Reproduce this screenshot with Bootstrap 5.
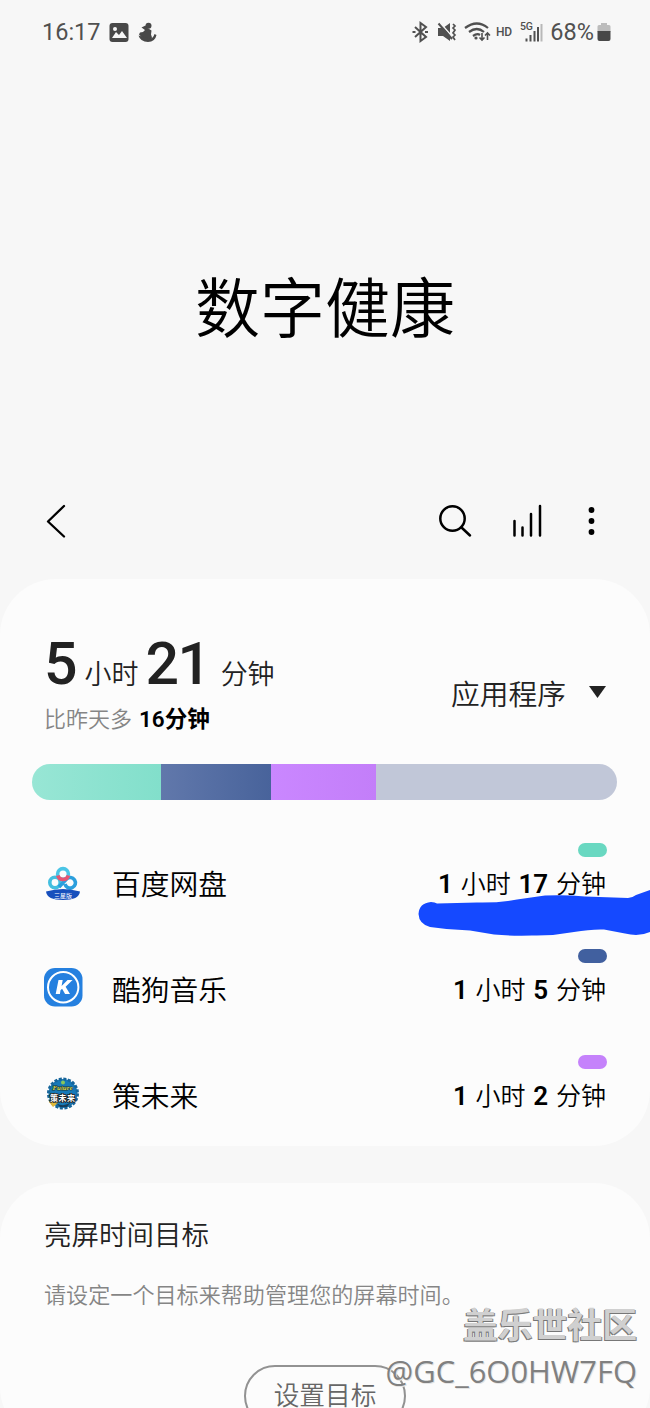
<!DOCTYPE html>
<html lang="zh-CN">
<head>
<meta charset="utf-8">
<meta name="viewport" content="width=device-width, initial-scale=1">
<title>数字健康</title>
<link href="https://cdn.jsdelivr.net/npm/bootstrap@5.3.0/dist/css/bootstrap.min.css" rel="stylesheet">
<style>
body{background:#f7f7f7;color:#000;font-family:Roboto,"Noto Sans CJK SC",sans-serif;height:1408px;overflow:hidden}
svg{display:block;flex:none}
.status{height:64px;padding:0 39px 0 42px;color:#505050;font-size:23.5px;line-height:30px}
.hero{height:421px;padding-top:70px}
.hero h1{font-size:65px;line-height:80px;font-weight:350}
.tools{height:72px;padding:0 48px 0 44px;margin-bottom:22px}
.panel{background:#fcfcfc;border-radius:56px}
.usage{height:567px;padding-top:55px}
.inset{padding:0 44px}
.total{height:60px;line-height:60px;font-size:27px;font-weight:350;color:#222}
.total b{font-size:59px;font-weight:500}
.delta{font-size:22px;line-height:30px;font-weight:350;color:#858585;margin-top:10px}
.delta b{color:#000;font-weight:600;margin-left:7px;font-size:22.5px}
.picker{font-size:28.75px;line-height:36px;font-weight:350;color:#222;margin-top:43px}
.meter{height:36px;margin:29px 32px 32px;border-radius:18px;overflow:hidden;width:585px}
.app{height:106px}
.app-name{font-size:28.75px;line-height:36px;font-weight:350;margin-left:28px}
.app-time{font-size:25px;line-height:35px;font-weight:350;white-space:pre;word-spacing:1.7px}
.app-time b{font-weight:600;font-size:26px}
.pill{width:29px;height:14px;border-radius:7px;margin:11px -1px 10px 0}
.mint{background:#69d8c1}.navy{background:#41609f}.violet{background:#c582fb}
.goal{margin-top:37px;padding-top:33px;height:260px}
.goal h2{font-size:27.5px;line-height:40px;font-weight:350;color:#222;margin:0}
.goal p{font-size:22.1px;line-height:30px;font-weight:350;color:#858585;margin:24px 0 55px}
.goal-btn{width:162px;height:62px;border:2px solid #929292;border-radius:31px;font-size:25.7px;line-height:30px;font-weight:350;color:#666;padding:0}
.scribble{left:418px;top:888px}
.stamp{right:13px;top:1302px;text-align:right;font-family:"Open Sans","Noto Sans CJK SC",sans-serif;white-space:nowrap}
.stamp-name{font-size:34.8px;line-height:46px;font-weight:700;color:#d0d0d0;text-shadow:-1px 1px 0 #777,1px 1px 0 #858585}
.stamp-id{font-size:30.9px;line-height:46px;color:#808080;text-shadow:1px 1px 0 #e4e4e4}
</style>
</head>
<body class="position-relative">
<header class="status d-flex align-items-center">
  <span>16:17</span>
  <svg style="margin-left:7px" width="50" height="24" viewBox="108 20 50 24">
    <rect x="109.500" y="23" width="19" height="19" rx="3" fill="#484848"/><circle cx="115" cy="29" r="2" fill="#f7f7f7"/><path d="M112 38l4-6 3 3 3-4 5 7z" fill="#f7f7f7"/>
    <g fill="#484848"><circle cx="148.500" cy="25.700" r="3"/><path d="M141.500 27.500l4-2 2 2.500 4 2.500-.5 4 1 3-2 3h-6l-3-4-2-2 1-2 3-.5 2-2z"/><path d="M138.500 35.500q2 6.500 9.500 6.500 7 0 8.500-7l-2-1q-1.500 5-5.500 4.500z"/></g>
  </svg>
  <svg class="ms-auto" width="134" height="30" viewBox="412 17 134 30" fill="none" stroke="#505050" stroke-width="2">
    <path d="M416 27l11 10-5.500 4V23l5.500 4-11 10M413.500 32h3M426 32h3"/>
    <path d="M439 28h5l7-5v18l-7-5h-5z" fill="#505050" stroke="none"/>
    <path d="M440.500 22l13 15" stroke="#f7f7f7" stroke-width="1.500"/><path d="M439.500 23.500l13.500 15.500"/>
    <path d="M454 24l2 2-2 2 2 2-2 3 2 2-2 2 2 3" stroke-width="1.700"/>
    <path d="M466 28q12-9 23 0M470 32q8-6 15 0M474 36q4-3 7-1" stroke-width="2.200"/><circle cx="477" cy="38" r="1.600" fill="#505050" stroke="none"/>
    <path d="M483 33v7m-2.500-2.500l2.500 2.500 2.500-2.500M488.500 40v-7m-2.500 2.500l2.500-2.500 2.500 2.500" stroke-width="1.600"/>
    <g fill="#505050" stroke="none" font-family="Roboto" font-weight="500"><text x="497" y="36" font-size="12" textLength="16">HD</text><text x="521" y="30" font-size="10.500" textLength="13">5G</text></g>
    <path d="M527.500 38.500v3M531.500 35v6.500M535.500 31v10.500M539 27v14.500" stroke-width="2"/><path d="M542.500 24v17.500" stroke="#b8b8b8" stroke-width="2"/>
  </svg>
  <span style="margin-left:5px">68%</span>
  <svg style="margin-left:3px" width="14" height="20" viewBox="0 0 14 20"><path d="M4 1h6v2h2q1.500 0 1.500 1.500V10H.5V4.500Q.5 3 2 3h2z" fill="#bcbcbc"/><path d="M.5 9h13v8q0 2-2 2h-9q-2 0-2-2z" fill="#484848"/></svg>
</header>

<section class="hero d-flex align-items-center justify-content-center"><h1 class="m-0">数字健康</h1></section>

<nav class="tools d-flex align-items-center">
  <svg width="24" height="36" viewBox="44 503 24 36" fill="none" stroke="#000" stroke-width="2.300" stroke-linecap="round" stroke-linejoin="round"><path d="M64 506L48 521.500l16 15"/></svg>
  <svg class="ms-auto" width="164" height="40" viewBox="438 501 164 40" fill="none" stroke="#000" stroke-width="2.500" stroke-linecap="round"><circle cx="452.500" cy="518.500" r="12.200"/><path d="M461.500 527.500l8.500 8"/><path d="M514.500 521v14.500M522.500 527.500v8M531 514v21.500M540 506v29.500"/><g fill="#000" stroke="none"><circle cx="591.500" cy="510" r="2.900"/><circle cx="591.500" cy="521" r="2.900"/><circle cx="591.500" cy="532" r="2.900"/></g></svg>
</nav>

<main>
<section class="panel usage">
  <div class="inset d-flex justify-content-between">
    <div>
      <div class="total d-flex align-items-baseline"><b>5</b><span style="margin-left:7px">小时</span><b style="margin-left:7px;letter-spacing:-1.500px">21</b><span style="margin-left:11px">分钟</span></div>
      <div class="delta">比昨天多<b>16分钟</b></div>
    </div>
    <div class="picker d-flex align-items-center align-self-start">应用程序<svg style="margin-left:23px;margin-top:-6px" width="17" height="12" viewBox="0 0 17 12"><path d="M0 0h17L8.500 12z" fill="#222"/></svg></div>
  </div>
  <div class="meter d-flex">
    <div style="width:129px;background:linear-gradient(90deg,#98e6d5,#82dfcb)"></div>
    <div style="width:110px;background:linear-gradient(90deg,#6178ab,#48639b)"></div>
    <div style="width:105px;background:linear-gradient(90deg,#ca87ff,#c37ef9)"></div>
    <div class="flex-fill" style="background:#c1c7d8"></div>
  </div>
  <div class="inset">
    <div class="app d-flex align-items-center">
      <svg width="40" height="40" viewBox="0 0 40 40" fill="none" stroke-width="3.600"><circle cx="11" cy="17.500" r="5.200" stroke="#43bfe0"/><path d="M21 19a5.300 5.300 0 1 0 1.500-5l-7.500 8" stroke="#2b9fdd"/><circle cx="19" cy="9" r="5.400" stroke="#4ac5e6"/><path d="M13.800 10.500a5.500 5.500 0 0 0 10.600 0" stroke="#e65572"/><path d="M2 26.500q17-5 34 0-1 8.500-17 8.500T2 26.500z" fill="#174fbd"/><text x="10" y="32.500" font-size="6" fill="#fff" font-family="Noto Sans CJK SC">三星版</text></svg>
      <span class="app-name">百度网盘</span>
      <div class="ms-auto align-self-start d-flex flex-column align-items-end"><i class="pill mint"></i><div class="app-time"><b>1</b> 小时 <b>17</b> 分钟</div></div>
    </div>
    <div class="app d-flex align-items-center">
      <svg style="margin-top:-8px" width="40" height="40" viewBox="0 0 40 40"><rect x="0" y="1" width="38.500" height="38.500" rx="11" fill="#2580df"/><circle cx="19.200" cy="20.200" r="15.200" fill="none" stroke="#fff" stroke-width="2"/><path d="M14.500 13h4.200l-1.100 6 6-6h5l-7 6.800 4.400 7.200h-4.900l-3-5.200-1.600 1.500-.6 3.700h-4.200z" fill="#fff"/></svg>
      <span class="app-name">酷狗音乐</span>
      <div class="ms-auto align-self-start d-flex flex-column align-items-end"><i class="pill navy"></i><div class="app-time"><b>1</b> 小时 <b>5</b> 分钟</div></div>
    </div>
    <div class="app d-flex align-items-center">
      <svg style="margin-top:-8px" width="40" height="40" viewBox="0 0 40 40"><circle cx="19" cy="20.500" r="14.500" fill="#1679b8"/><circle cx="19" cy="20.500" r="14.500" fill="none" stroke="#17659a" stroke-width="3" stroke-dasharray="3 1.550"/><circle cx="19" cy="9.500" r="2" fill="#89c65a"/><path d="M5 29l5-3 4 4-5 4z" fill="#e1b83a"/><path d="M12 30q8 5 15-1l-4 5h-7z" fill="#153d5b"/><text x="8.500" y="16.500" font-size="7" font-weight="700" font-style="italic" fill="#d8d756" stroke="#193b35" stroke-width="1" paint-order="stroke" font-family="Liberation Serif" textLength="20">Future</text><text x="6" y="27.500" font-size="8" font-weight="700" fill="#fff" stroke="#222" stroke-width="1.600" paint-order="stroke" font-family="Noto Sans CJK SC" textLength="25">策未来</text></svg>
      <span class="app-name">策未来</span>
      <div class="ms-auto align-self-start d-flex flex-column align-items-end"><i class="pill violet"></i><div class="app-time"><b>1</b> 小时 <b>2</b> 分钟</div></div>
    </div>
  </div>
</section>
<section class="panel goal inset">
  <h2>亮屏时间目标</h2>
  <p>请设定一个目标来帮助管理您的屏幕时间。</p>
  <button class="goal-btn btn d-block mx-auto">设置目标</button>
</section>
</main>

<svg class="scribble position-absolute" width="232" height="50" viewBox="418 888 232 50"><path d="M431 902Q435 902 437 903.500L477 902.500Q498 903 517 899.500L545 895.500Q565 894.500 585 896.500L628 898Q632 898 636 895L650 890V932Q639 937 625 933.500L604 929.500Q591 929 574 932Q553 936 532 935.500Q510 936 494 934.500L470 930.500Q449 930 430 927Q419 924 418.500 914Q419 903 431 902Z" fill="#1549ff"/></svg>
<div class="stamp position-absolute"><div class="stamp-name">盖乐世社区</div><div class="stamp-id">@GC_6O0HW7FQ</div></div>
<script src="https://cdn.jsdelivr.net/npm/bootstrap@5.3.0/dist/js/bootstrap.bundle.min.js"></script>
</body>
</html>
